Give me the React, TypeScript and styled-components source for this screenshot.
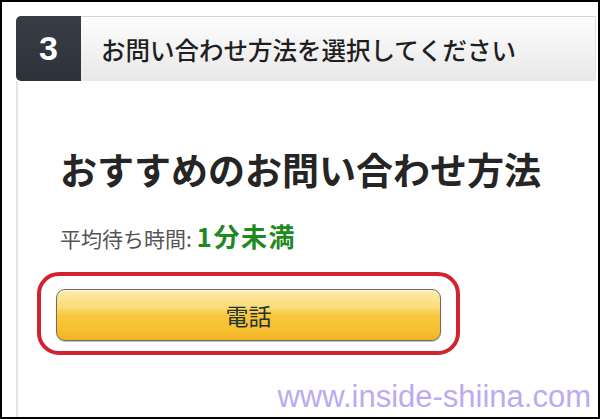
import * as React from 'react';
import styled, { createGlobalStyle } from 'styled-components';

const GlobalStyle = createGlobalStyle`
	html, body {
		margin: 0;
		padding: 0;
		background: #fff;
	}
	body {
		font-family: 'Noto Sans CJK JP', 'Noto Sans', sans-serif;
	}
`;

const Frame = styled.div`
	position: relative;
	width: 600px;
	height: 419px;
	box-sizing: border-box;
	border: 2px solid #000;
	padding: 14px 2px 0 14px;
	display: flex;
	flex-direction: column;
	overflow: hidden;
	background: #fff;
`;

const StepHeader = styled.div`
	display: flex;
	height: 65px;
	flex-shrink: 0;
`;

const StepNumber = styled.div`
	width: 65px;
	display: flex;
	align-items: center;
	justify-content: center;
	background: linear-gradient(#363d47, #2c333d);
	border-radius: 5px 0 0 5px;
	color: #fff;
	font-family: 'Liberation Sans', Arial, sans-serif;
	font-weight: bold;
	font-size: 34px;
`;

const StepTitle = styled.div`
	flex: 1;
	display: flex;
	align-items: center;
	padding-left: 20px;
	box-sizing: border-box;
	border-top: 1px solid #d4d4d4;
	border-right: 1px solid #e2e2e2;
	background: linear-gradient(#fdfdfd, #e8e8e8);
	color: #1f1f1f;
	font-size: 24.5px;
	font-weight: 500;
`;

const Panel = styled.div`
	flex: 1;
	border-left: 2px solid #e4e4e4;
	padding: 64px 0 0 42px;
	display: flex;
	flex-direction: column;
	align-items: flex-start;
`;

const Heading = styled.h1`
	margin: 0;
	font-size: 37px;
	line-height: 48px;
	font-weight: bold;
	color: #252525;
`;

const WaitLine = styled.div`
	margin-top: 28px;
	font-size: 21px;
	line-height: 30px;
	color: #555;
`;

const WaitValue = styled.span`
	color: #1f8a1f;
	font-weight: bold;
	font-size: 26px;
	letter-spacing: 1.5px;
`;

const Highlight = styled.div`
	margin: 19px 0 0 -23px;
	width: 423px;
	box-sizing: border-box;
	border: 4px solid #d22430;
	border-radius: 22px;
	padding: 13px 15px 10px 15px;
`;

const CallButton = styled.button`
	display: block;
	width: 100%;
	height: 52px;
	border: 1px solid #6e6c60;
	border-radius: 9px;
	background: linear-gradient(
		#fdeba8 0%,
		#fbdc78 35%,
		#f8c73c 50%,
		#f6c030 80%,
		#efb322 100%
	);
	box-shadow: inset 0 1px 0 rgba(255, 255, 255, 0.7), 0 1px 1px rgba(0, 0, 0, 0.25);
	color: #1f3434;
	font-family: 'Noto Sans CJK JP', sans-serif;
	font-size: 23px;
	cursor: pointer;
`;

const Watermark = styled.div`
	position: absolute;
	right: 7px;
	bottom: 2px;
	font-family: 'Liberation Sans', Arial, sans-serif;
	font-size: 31px;
	color: #bcaaf2;
	pointer-events: none;
`;

export default function App() {
	return (
		<>
			<GlobalStyle />
			<Frame>
				<StepHeader>
					<StepNumber>3</StepNumber>
					<StepTitle>お問い合わせ方法を選択してください</StepTitle>
				</StepHeader>
				<Panel>
					<Heading>おすすめのお問い合わせ方法</Heading>
					<WaitLine>
						平均待ち時間: <WaitValue>1分未満</WaitValue>
					</WaitLine>
					<Highlight>
						<CallButton>電話</CallButton>
					</Highlight>
				</Panel>
				<Watermark>www.inside-shiina.com</Watermark>
			</Frame>
		</>
	);
}
